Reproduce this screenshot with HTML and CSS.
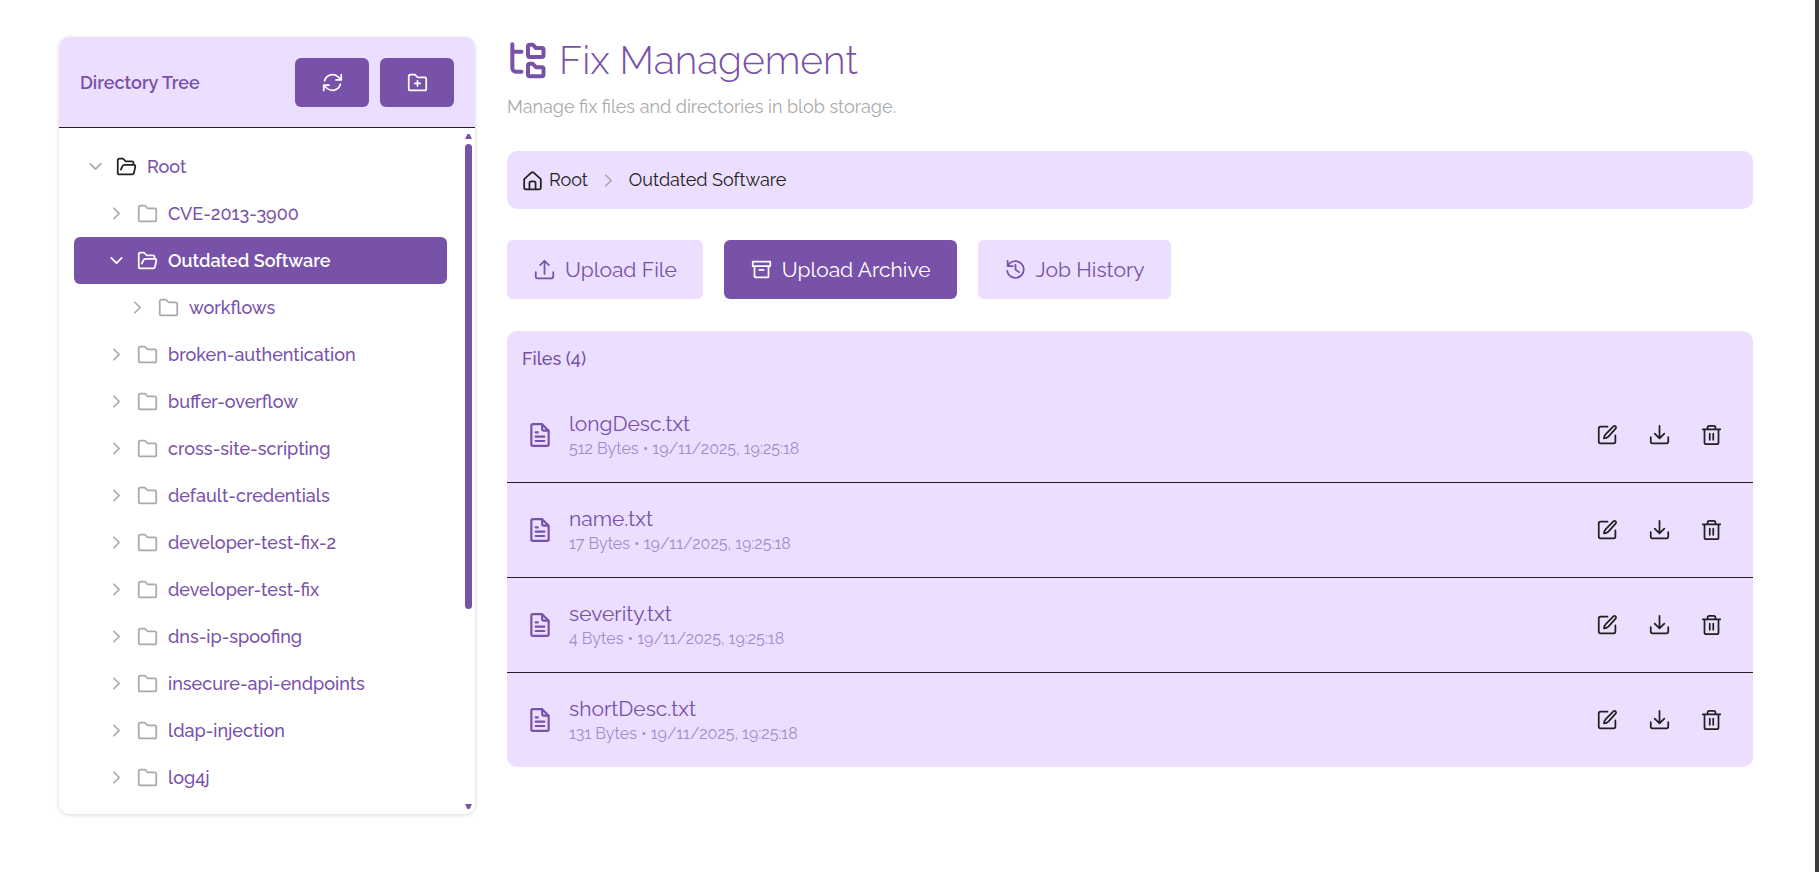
FILE: index.html
```html
<!DOCTYPE html>
<html lang="en">
<head>
  <meta charset="utf-8">
  <title>Fix Management</title>
  <link rel="stylesheet" href="styles.css">
</head>
<body>
  <!-- Icon definitions -->
  <svg class="sprite" aria-hidden="true">
    <symbol id="chevron-down" viewBox="0 0 24 24"><path d="m6 9 6 6 6-6"/></symbol>
    <symbol id="chevron-right" viewBox="0 0 24 24"><path d="m9 6 6 6-6 6"/></symbol>
    <symbol id="folder" viewBox="0 0 24 24"><path d="M2 19V5a2 2 0 0 1 2-2h5l3 3h8a2 2 0 0 1 2 2v11a2 2 0 0 1-2 2H4a2 2 0 0 1-2-2Z"/></symbol>
    <symbol id="folder-open" viewBox="0 0 24 24"><path d="M2 19V5a2 2 0 0 1 2-2h4l3 3h7a2 2 0 0 1 2 2v2M2 19a2 2 0 0 0 2 2h14.500a2 2 0 0 0 2-1.500l1.500-7a2 2 0 0 0-2-2.500H10a3 3 0 0 0-2.800 2L5.500 15.500"/></symbol>
    <symbol id="folder-plus" viewBox="0 0 24 24"><path d="M2 19V5a2 2 0 0 1 2-2h5l3 3h8a2 2 0 0 1 2 2v11a2 2 0 0 1-2 2H4a2 2 0 0 1-2-2ZM12 10v6M9 13h6"/></symbol>
    <symbol id="refresh" viewBox="0 0 24 24"><path d="M22 3v6h-6M2 21v-6h6M3 10a9.500 9.500 0 0 1 16-4l3 3M2 15l3 3a9.500 9.500 0 0 0 16-4"/></symbol>
    <symbol id="folder-tree" viewBox="0 0 24 24"><path d="M3.200 2.500V17a2 2 0 0 0 2 2h3.500M3.200 7h5.500M13.600 2.800h1.800l2 2h3.500a1 1 0 0 1 1 1v3.400a1 1 0 0 1-1 1h-7.300a1 1 0 0 1-1-1V3.800a1 1 0 0 1 1-1ZM13.600 14.300h1.800l2 2h3.500a1 1 0 0 1 1 1v3.400a1 1 0 0 1-1 1h-7.300a1 1 0 0 1-1-1v-5.400a1 1 0 0 1 1-1Z"/></symbol>
    <symbol id="home" viewBox="0 0 24 24"><path d="M2.500 10.500 10.700 3a2 2 0 0 1 2.600 0l8.200 7.500V20a2 2 0 0 1-2 2h-15a2 2 0 0 1-2-2ZM8.500 22v-7a2 2 0 0 1 2-2h3a2 2 0 0 1 2 2v7"/></symbol>
    <symbol id="upload" viewBox="0 0 24 24"><path d="M2 15v5a2 2 0 0 0 2 2h16a2 2 0 0 0 2-2v-5M12 17V2M7 7l5-5 5 5"/></symbol>
    <symbol id="archive" viewBox="0 0 24 24"><path d="M2 3h20v5H2ZM4 8v12a1 1 0 0 0 1 1h14a1 1 0 0 0 1-1V8M9.500 12.500h5"/></symbol>
    <symbol id="history" viewBox="0 0 24 24"><path d="M3 2v6h6M3.500 7.500a9.500 9.500 0 1 1-1 6M12 6.500V12l4 3"/></symbol>
    <symbol id="file" viewBox="0 0 24 24"><path d="M14 2H5.500A1.500 1.500 0 0 0 4 3.500v17A1.500 1.500 0 0 0 5.500 22h13a1.500 1.500 0 0 0 1.500-1.500V8ZM14 2v4.500A1.500 1.500 0 0 0 15.500 8H20M8 9.500h2M8 13.500h8M8 17.500h8"/></symbol>
    <symbol id="edit" viewBox="0 0 24 24"><path d="M12 3H4a2 2 0 0 0-2 2v15a2 2 0 0 0 2 2h15a2 2 0 0 0 2-2v-7M19 2.500a1.800 1.800 0 0 1 2.500 2.500L13 14.500c-1.500 1.500-3 2-5 2 0-2 .500-3.500 2-5Z"/></symbol>
    <symbol id="download" viewBox="0 0 24 24"><path d="M2 15v5a2 2 0 0 0 2 2h16a2 2 0 0 0 2-2v-5M12 2v14M6.500 11l5.500 5.500 5.500-5.500"/></symbol>
    <symbol id="trash" viewBox="0 0 24 24"><path d="M2 6h20M4 6v15a2 2 0 0 0 2 2h12a2 2 0 0 0 2-2V6M7.500 6V4a2 2 0 0 1 2-2h5a2 2 0 0 1 2 2v2M10 11v7M14 11v7"/></symbol>
  </svg>

  <div class="page">
    <aside class="sidebar">
      <div class="sidebar-header">
        <h2>Directory Tree</h2>
        <button type="button" class="tree-btn" aria-label="Refresh"><svg class="icon"><use href="#refresh"/></svg></button>
        <button type="button" class="tree-btn" aria-label="New folder"><svg class="icon"><use href="#folder-plus"/></svg></button>
      </div>
      <div class="sidebar-body">
        <nav class="tree" id="tree" aria-label="Directories"></nav>
        <div class="scrollbar" aria-hidden="true">
          <span class="arrow-up"></span>
          <span class="track"><span class="thumb"></span></span>
          <span class="arrow-down"></span>
        </div>
      </div>
    </aside>

    <main class="content">
      <h1><svg class="icon"><use href="#folder-tree"/></svg>Fix Management</h1>
      <p class="subtitle">Manage fix files and directories in blob storage.</p>

      <nav class="breadcrumb" aria-label="Breadcrumb">
        <a href="#"><svg class="icon"><use href="#home"/></svg>Root</a>
        <svg class="icon separator"><use href="#chevron-right"/></svg>
        <a href="#">Outdated Software</a>
      </nav>

      <div class="actions">
        <button type="button" class="action"><svg class="icon"><use href="#upload"/></svg>Upload File</button>
        <button type="button" class="action primary"><svg class="icon"><use href="#archive"/></svg>Upload Archive</button>
        <button type="button" class="action"><svg class="icon"><use href="#history"/></svg>Job History</button>
      </div>

      <section class="files">
        <h3>Files (4)</h3>
        <ul id="files"></ul>
      </section>
    </main>
  </div>

  <script src="script.js"></script>
</body>
</html>
```
FILE: styles.css
```css
* {
  box-sizing: border-box;
}

body {
  margin: 0;
  min-height: 100vh;
  border-right: 4px solid #3c3c3c;
  background-color: #fff;
  color: #7851a9;
  font-family: Raleway, Lato, sans-serif;
  font-size: 18px;
  line-height: 26px;
}

h1,
h2,
h3,
p,
ul {
  margin: 0;
  padding: 0;
}

a {
  color: inherit;
  text-decoration: none;
}

button {
  border: none;
  font: inherit;
  cursor: pointer;
}

.sprite {
  display: none;
}

.icon {
  flex: none;
  width: 21px;
  height: 21px;
  fill: none;
  stroke: currentColor;
  stroke-width: 2;
  stroke-linecap: round;
  stroke-linejoin: round;
}

.page {
  display: flex;
  align-items: flex-start;
  gap: 32px;
  padding: 37px 62px 57px 59px;
}

/* Directory tree */
.sidebar {
  display: flex;
  flex-direction: column;
  flex: none;
  width: 416px;
  height: calc(100vh - 95px);
  overflow: hidden;
  border-radius: 10px;
  box-shadow: 0 1px 4px rgba(0, 0, 0, 0.16);
}

.sidebar-header {
  display: flex;
  align-items: center;
  gap: 11px;
  padding: 21px 21px 20px;
  border-bottom: 1px solid #212121;
  background-color: #ebdeff;
}

.sidebar-header h2 {
  flex: 1;
  font-size: 18px;
  font-weight: 600;
}

.tree-btn {
  display: flex;
  align-items: center;
  justify-content: center;
  width: 74px;
  height: 49px;
  border-radius: 6px;
  background-color: #7851a9;
  color: #fff;
}

.sidebar-body {
  display: flex;
  flex: 1;
  min-height: 0;
}

.tree {
  flex: 1;
  padding: 15px 18px 15px 15px;
  overflow: hidden;
}

.node {
  display: flex;
  align-items: center;
  gap: 10px;
  width: 100%;
  height: 47px;
  padding: 0 11px;
  border-radius: 6px;
  background: none;
  color: #7851a9;
  font-weight: 500;
  text-align: left;
}

.node.level-1 {
  padding-left: 32px;
}

.node.level-2 {
  padding-left: 53px;
}

.node .icon {
  color: #aaa;
}

.node.root .folder {
  color: #212121;
}

.node.active {
  background-color: #7851a9;
  color: #fff;
  font-weight: 600;
}

.node.active .icon {
  color: #fff;
}

.scrollbar {
  display: flex;
  flex-direction: column;
  gap: 5px;
  width: 7px;
  margin: 6px 3px 5px 0;
}

.arrow-up,
.arrow-down {
  height: 5px;
  background-color: #7851a9;
  clip-path: polygon(35% 0, 65% 0, 100% 100%, 0 100%);
}

.arrow-down {
  clip-path: polygon(0 0, 100% 0, 65% 100%, 35% 100%);
}

.track {
  flex: 1;
}

.thumb {
  display: block;
  height: 71%;
  border-radius: 4px;
  background-color: #7851a9;
}

/* Main content */
.content {
  flex: 1;
  min-width: 0;
}

h1 {
  display: flex;
  align-items: center;
  gap: 12px;
  font-size: 39px;
  font-weight: 300;
  line-height: 46px;
}

h1 .icon {
  width: 40px;
  height: 40px;
  stroke-width: 2.4;
}

.subtitle {
  margin-top: 11px;
  color: #aaa;
}

.breadcrumb {
  display: flex;
  align-items: center;
  gap: 10px;
  height: 58px;
  margin-top: 31px;
  padding: 0 15px;
  border-radius: 10px;
  background-color: #ebdeff;
  color: #212121;
}

.breadcrumb a {
  display: flex;
  align-items: center;
  gap: 6px;
}

.breadcrumb .separator {
  color: #aaa;
}

.actions {
  display: flex;
  gap: 21px;
  margin: 31px 0 32px;
}

.action {
  display: flex;
  align-items: center;
  gap: 10px;
  height: 59px;
  padding: 0 26px 0 27px;
  border-radius: 6px;
  background-color: #ebdeff;
  color: #7851a9;
  font-size: 21px;
}

.action.primary {
  background-color: #7851a9;
  color: #fff;
}

.files {
  overflow: hidden;
  border-radius: 10px;
  background-color: #ebdeff;
}

.files h3 {
  padding: 15px 15px 16px;
  font-size: 18px;
  font-weight: 500;
}

.files ul {
  list-style: none;
}

.file {
  display: flex;
  align-items: center;
  height: 95px;
  padding: 0 21px 0 20px;
  border-bottom: 1px solid #212121;
}

.file:last-child {
  height: 94px;
  border-bottom: none;
}

.file > .icon {
  width: 26px;
  height: 26px;
  margin-right: 16px;
}

.file-info {
  flex: 1;
  padding-top: 2px;
}

.file-name {
  font-size: 21px;
}

.file-meta {
  font-size: 16px;
  line-height: 24px;
  opacity: 0.6;
}

.file-btn {
  display: flex;
  padding: 9px 10px 11px;
  margin-left: 11px;
  background: none;
  color: #212121;
}
```
FILE: script.js
```js
const directories = [
  { name: 'Root', level: 0, open: true },
  { name: 'CVE-2013-3900', level: 1 },
  { name: 'Outdated Software', level: 1, open: true, active: true },
  { name: 'workflows', level: 2 },
  { name: 'broken-authentication', level: 1 },
  { name: 'buffer-overflow', level: 1 },
  { name: 'cross-site-scripting', level: 1 },
  { name: 'default-credentials', level: 1 },
  { name: 'developer-test-fix-2', level: 1 },
  { name: 'developer-test-fix', level: 1 },
  { name: 'dns-ip-spoofing', level: 1 },
  { name: 'insecure-api-endpoints', level: 1 },
  { name: 'ldap-injection', level: 1 },
  { name: 'log4j', level: 1 }
];

const files = [
  { name: 'longDesc.txt', size: 512 },
  { name: 'name.txt', size: 17 },
  { name: 'severity.txt', size: 4 },
  { name: 'shortDesc.txt', size: 131 }
];

const icon = (id, cls = '') => `<svg class="icon ${cls}"><use href="#${id}"/></svg>`;

// Directory tree rows
document.getElementById('tree').innerHTML = directories.map(dir => `
  <button type="button" class="node level-${dir.level} ${dir.level ? '' : 'root'} ${dir.active ? 'active' : ''}">
    ${icon(dir.open ? 'chevron-down' : 'chevron-right', 'chevron')}
    ${icon(dir.open ? 'folder-open' : 'folder', 'folder')}
    <span>${dir.name}</span>
  </button>`).join('');

// File rows with their actions
document.getElementById('files').innerHTML = files.map(file => `
  <li class="file">
    ${icon('file')}
    <div class="file-info">
      <div class="file-name">${file.name}</div>
      <div class="file-meta">${file.size} Bytes • 19/11/2025, 19:25:18</div>
    </div>
    <button type="button" class="file-btn" aria-label="Edit ${file.name}">${icon('edit')}</button>
    <button type="button" class="file-btn" aria-label="Download ${file.name}">${icon('download')}</button>
    <button type="button" class="file-btn" aria-label="Delete ${file.name}">${icon('trash')}</button>
  </li>`).join('');
```
